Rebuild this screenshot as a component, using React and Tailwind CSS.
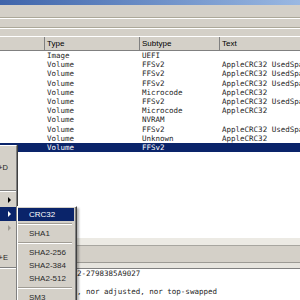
import React from 'react';

const rows = [
  ['Image', 'UEFI', ''],
  ['Volume', 'FFSv2', 'AppleCRC32 UsedSpace 0AE000h'],
  ['Volume', 'FFSv2', 'AppleCRC32 UsedSpace 3F8000h'],
  ['Volume', 'FFSv2', 'AppleCRC32 UsedSpace 01C000h'],
  ['Volume', 'Microcode', 'AppleCRC32'],
  ['Volume', 'FFSv2', 'AppleCRC32 UsedSpace 04F000h'],
  ['Volume', 'Microcode', 'AppleCRC32'],
  ['Volume', 'NVRAM', ''],
  ['Volume', 'FFSv2', 'AppleCRC32 UsedSpace 012000h'],
  ['Volume', 'Unknown', 'AppleCRC32'],
  ['Volume', 'FFSv2', ''],
];

const mainItems = [
  { h: 'h-[14px]' },
  { h: 'h-[14px]', keys: '+D' },
  { h: 'h-[13px]' },
  { h: 'h-[5px]', sep: true },
  { h: 'h-[14px]', arrow: true },
  { h: 'h-[14px]', arrow: true, active: true },
  { h: 'h-[14px]', arrow: true, disabled: true },
  { h: 'h-[16px]' },
  { h: 'h-[14px]', keys: '+E' },
  { h: 'h-[5px]', sep: true },
  { h: 'h-[14px]' },
  { h: 'h-[14px]' },
];

const subItems = ['CRC32', '-', 'SHA1', '-', 'SHA2-256', 'SHA2-384', 'SHA2-512', '-', 'SM3'];

const Arrow = ({ color }) => (
  <svg width="3" height="6" viewBox="0 0 3 6">
    <path d="M0 0L3 3L0 6Z" fill={color} />
  </svg>
);

const Etch = () => (
  <>
    <div className="h-[1px] bg-[#aca899]" />
    <div className="h-[1px] bg-white" />
  </>
);

export default function App() {
  return (
    <div className="relative w-[300px] h-[300px] overflow-hidden bg-white flex flex-col font-['Liberation_Sans',sans-serif]">
      {/* window title */}
      <div className="h-[5px] shrink-0 bg-gradient-to-r from-[#3f64aa] to-[#9ab8e2]" />
      <div className="h-[12px] shrink-0 bg-[#d4d0c8]" />
      <Etch />
      <div className="h-[8px] shrink-0 bg-[#d4d0c8]" />
      <Etch />
      <div className="h-[7px] shrink-0 bg-[#d4d0c8]" />

      {/* tree header */}
      <div className="grid grid-cols-[45px_95px_80px_80px] h-[15px] shrink-0 bg-[#d4d0c8] border-t border-white border-b border-b-[#808080] text-[8px] leading-[13px] text-black">
        <div className="border-r border-[#808080]" />
        <div className="border-r border-[#808080] pl-[2px]">Type</div>
        <div className="border-r border-[#808080] pl-[2px]">Subtype</div>
        <div className="pl-[2px]">Text</div>
      </div>

      {/* tree rows */}
      <div className="shrink-0 font-['DejaVu_Sans_Mono',monospace] text-[7.5px] leading-[9.2px]">
        {rows.map((r, i) => {
          const sel = i === rows.length - 1;
          return (
            <div
              key={i}
              className={
                sel
                  ? 'grid grid-cols-[45px_95px_80px_80px] h-[9.2px] bg-[#0a246a] text-white'
                  : 'grid grid-cols-[45px_95px_80px_80px] h-[9.2px] text-[#1e1e1e]'
              }
            >
              <div />
              <div className="pl-[2px] whitespace-nowrap overflow-hidden">{r[0]}</div>
              <div className="pl-[2px] whitespace-nowrap overflow-hidden">{r[1]}</div>
              <div className="pl-[2px] whitespace-nowrap overflow-hidden">{r[2]}</div>
            </div>
          );
        })}
      </div>

      <div className="flex-1" />

      {/* messages dock title */}
      <div className="h-[7px] shrink-0 bg-[#eceae4]" />
      <div className="h-[1px] shrink-0 bg-[#a8a6a0]" />
      <div className="h-[16px] shrink-0 bg-[#d4d0c8]" />
      <div className="h-[1px] shrink-0 bg-[#9c9a94]" />
      <div className="h-[5px] shrink-0 bg-[#e6e4de]" />
      <div className="h-[1px] shrink-0 bg-[#808080]" />

      {/* messages (start hidden under the menus) */}
      <div className="h-[31px] shrink-0 pl-[77px] font-['DejaVu_Sans_Mono',monospace] text-[7.5px] leading-[9.2px] text-[#1e1e1e] whitespace-nowrap">
        <div>2-2798385A9027</div>
        <div className="h-[9.2px]" />
        <div>, nor adjusted, nor top-swapped</div>
      </div>

      {/* context menu */}
      <div className="absolute left-0 top-[145px] w-[18px] h-[160px] bg-[#d4d0c8] border-r border-[#404040]">
        <div className="h-full border-r border-[#808080] border-t border-t-white pt-[1px] overflow-hidden">
          {mainItems.map((it, i) => {
            if (it.sep) {
              return (
                <div key={i} className={`${it.h} flex flex-col justify-center`}>
                  <div className="h-[1px] bg-[#808080]" />
                  <div className="h-[1px] bg-white" />
                </div>
              );
            }
            if (it.arrow) {
              return (
                <div
                  key={i}
                  className={
                    it.active
                      ? `${it.h} flex items-center justify-end pr-[5px] bg-[#0a246a]`
                      : `${it.h} flex items-center justify-end pr-[5px]`
                  }
                >
                  <Arrow color={it.active ? '#ffffff' : it.disabled ? '#a09c94' : '#000000'} />
                </div>
              );
            }
            return (
              <div key={i} className={`${it.h} flex items-center justify-end pr-[8px] text-[7.5px] text-[#1e1e1e] whitespace-nowrap`}>
                {it.keys && <span className="shrink-0 -ml-[3px]">{it.keys}</span>}
              </div>
            );
          })}
        </div>
      </div>

      {/* hashes submenu */}
      <div className="absolute left-[17px] top-[206px] w-[60px] bg-[#d4d0c8] border-l border-t border-white border-r border-b border-r-[#404040] border-b-[#404040] shadow-[2px_2px_2px_rgba(0,0,0,0.3)]">
        <div className="border-r border-b border-[#808080] pt-[1px] pr-[1px] pb-[2px]">
          {subItems.map((s, i) =>
            s === '-' ? (
              <div key={i} className="h-[6px] flex flex-col justify-center pr-[2px]">
                <div className="h-[1px] bg-[#a09c94]" />
                <div className="h-[1px] bg-white" />
              </div>
            ) : (
              <div
                key={i}
                className={
                  i === 0
                    ? 'h-[13px] pl-[11px] flex items-center text-[8px] bg-[#0a246a] text-white'
                    : 'h-[13px] pl-[11px] flex items-center text-[8px] text-[#2a2a2a]'
                }
              >
                {s}
              </div>
            )
          )}
        </div>
      </div>
    </div>
  );
}
